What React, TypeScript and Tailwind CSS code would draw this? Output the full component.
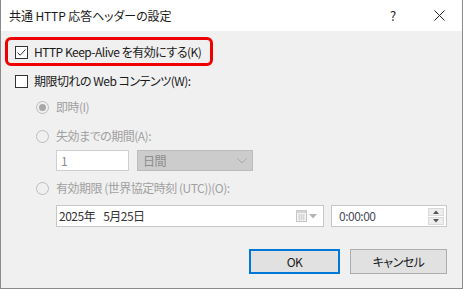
import React from "react";

const font = { fontFamily: '"Noto Sans CJK JP", "Noto Sans", sans-serif' };

function Checkbox({ checked }: { checked?: boolean }) {
  return (
    <div className="w-[13px] h-[13px] border border-[#333333] bg-white flex items-center justify-center shrink-0">
      {checked && (
        <svg width="11" height="11" viewBox="0 0 11 11">
          <path d="M1.5 5.5 L4.2 8.2 L9.5 2.5" fill="none" stroke="#333" strokeWidth="1" />
        </svg>
      )}
    </div>
  );
}

function Radio({ checked }: { checked?: boolean }) {
  return (
    <div className="w-[13px] h-[13px] rounded-full border border-[#bcbcbc] bg-[#f0f0f0] flex items-center justify-center shrink-0">
      {checked && <div className="w-[7px] h-[7px] rounded-full bg-[#a8a8a8]" />}
    </div>
  );
}

export default function App() {
  return (
    <div
      className="w-[463px] h-[289px] flex flex-col border-x border-b border-[#8a8a8a] bg-[#f0f0f0] text-[12px] text-[#1a1a1a] [font-feature-settings:'palt']"
      style={font}
    >
      {/* Title bar */}
      <div className="h-[31px] bg-white flex items-center shrink-0">
        <div className="pl-[8px] flex-1 leading-none tracking-[-0.1px]">共通 HTTP 応答ヘッダーの設定</div>
        <div className="w-[46px] flex justify-center text-[13px] text-[#222]">?</div>
        <div className="w-[46px] flex justify-center mr-[0px]">
          <svg width="11" height="11" viewBox="0 0 11 11">
            <path d="M0.5 0.5 L10.5 10.5 M10.5 0.5 L0.5 10.5" stroke="#222" strokeWidth="1" />
          </svg>
        </div>
      </div>

      {/* Content */}
      <div className="flex flex-col pl-[14px] pt-[11px] tracking-[-0.5px]">
        <div className="relative h-[20px] flex items-center gap-[6px]">
          <div className="absolute left-[-10px] top-[-5px] w-[208px] h-[29px] rounded-[6px] border-[3px] border-[#f00000]" />
          <Checkbox checked />
          <span className="leading-none">HTTP Keep-Alive を有効にする(K)</span>
        </div>

        <div className="h-[20px] mt-[9px] flex items-center gap-[6px]">
          <Checkbox />
          <span className="leading-none">期限切れの Web コンテンツ(W):</span>
        </div>

        <div className="flex flex-col pl-[21px] text-[#a0a0a0]">
          <div className="h-[20px] mt-[6px] flex items-center gap-[7px]">
            <Radio checked />
            <span className="leading-none">即時(I)</span>
          </div>
          <div className="h-[20px] mt-[9px] flex items-center gap-[7px]">
            <Radio />
            <span className="leading-none">失効までの期間(A):</span>
          </div>

          <div className="flex pl-[20px] mt-[4px] gap-[8px]">
            <div className="w-[73px] h-[21px] border border-[#cfcfcf] bg-white flex items-center pl-[4px] text-[#8c8c8c] leading-none">
              1
            </div>
            <div className="w-[116px] h-[21px] border border-[#bcbcbc] bg-[#cccccc] flex items-center justify-between pl-[5px] pr-[5px] text-[#8c8c8c] leading-none">
              <span>日間</span>
              <svg width="10" height="6" viewBox="0 0 10 6">
                <path d="M0.5 0.5 L5 5 L9.5 0.5" fill="none" stroke="#a8a8a8" strokeWidth="1" />
              </svg>
            </div>
          </div>

          <div className="h-[20px] mt-[7px] flex items-center gap-[7px]">
            <Radio />
            <span className="leading-none">有効期限 (世界協定時刻 (UTC))(O):</span>
          </div>

          <div className="flex pl-[20px] mt-[7px] gap-[7px]">
            <div className="w-[268px] h-[22px] border border-[#c8c8c8] bg-white flex items-center pl-[2px] pr-[6px] justify-between text-[#333] leading-none">
              <span className="flex">
                <span>2025年</span>
                <span className="ml-[8px]">5月25日</span>
              </span>
              <div className="flex items-center gap-[2px]">
                <svg width="11" height="12" viewBox="0 0 11 12">
                  <rect x="0.5" y="0.5" width="10" height="11" fill="#f4f4f4" stroke="#c4c4c4" />
                  <rect x="0.5" y="0.5" width="10" height="2.5" fill="#d4d4d4" />
                  <path d="M2 5 H9 M2 7 H9 M2 9 H9 M3.5 4 V10.5 M5.5 4 V10.5 M7.5 4 V10.5" stroke="#d0d0d0" strokeWidth="0.8" />
                </svg>
                <svg width="8" height="5" viewBox="0 0 8 5">
                  <path d="M0 0 L8 0 L4 4.5 Z" fill="#b4b4b4" />
                </svg>
              </div>
            </div>
            <div className="w-[116px] h-[22px] border border-[#c8c8c8] bg-white flex items-center justify-between pl-[7px] pr-[2px] text-[#4a4a5a] leading-none">
              <span>0:00:00</span>
              <div className="flex flex-col gap-[1px]">
                <div className="w-[16px] h-[8px] bg-[#eeeeee] border border-[#dadada] flex items-center justify-center">
                  <svg width="6" height="4" viewBox="0 0 6 4"><path d="M0 4 L3 0.5 L6 4 Z" fill="#555" /></svg>
                </div>
                <div className="w-[16px] h-[8px] bg-[#eeeeee] border border-[#dadada] flex items-center justify-center">
                  <svg width="6" height="4" viewBox="0 0 6 4"><path d="M0 0 L3 3.5 L6 0 Z" fill="#555" /></svg>
                </div>
              </div>
            </div>
          </div>
        </div>

        <div className="flex justify-end gap-[10px] mt-[22px] pr-[15px]">
          <div className="w-[91px] h-[25px] border-2 border-[#0078d7] bg-[#e1e1e1] flex items-center justify-center leading-none">
            OK
          </div>
          <div className="w-[97px] h-[25px] border border-[#adadad] bg-[#e1e1e1] flex items-center justify-center leading-none">
            キャンセル
          </div>
        </div>
      </div>
    </div>
  );
}
